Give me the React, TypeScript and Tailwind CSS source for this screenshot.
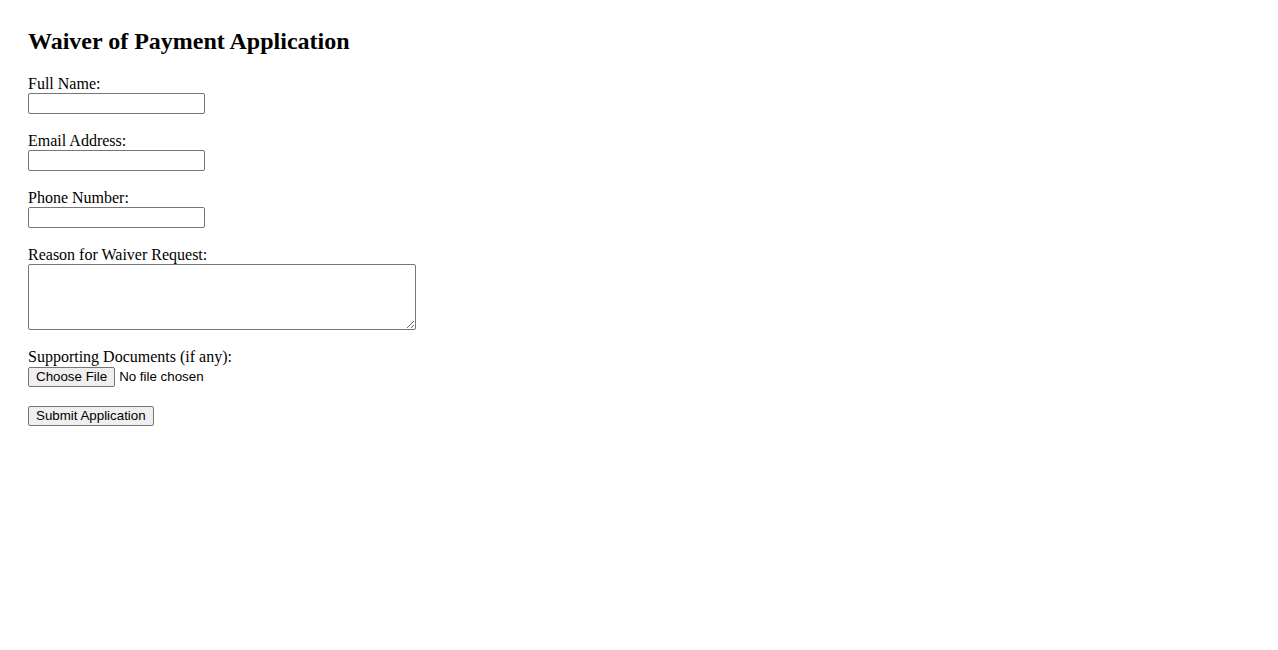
export default function App() {
  return (
    <div className="min-h-screen bg-white px-[28px] pt-[28px] text-black font-['Liberation_Serif',serif]">
      <h2 className="text-[24px] font-bold leading-[27.6px] mb-[19px]">Waiver of Payment Application</h2>
      <form onSubmit={(e) => e.preventDefault()}>
        <TextField label="Full Name:" />
        <TextField label="Email Address:" />
        <TextField label="Phone Number:" />

        <label className="block text-[16px] leading-[18px]">Reason for Waiver Request:</label>
        <textarea className="block w-[388px] h-[66px] border border-[#767676] rounded-[2px] mb-[18px] outline-none" />

        <label className="block text-[16px] leading-[18px]">Supporting Documents (if any):</label>
        <div className="flex items-center h-[22px] mb-[15px] font-['Liberation_Sans',sans-serif] text-[13.33px]">
          <button
            type="button"
            className="h-[20px] px-[7px] bg-[#efefef] border border-[#767676] rounded-[2px] leading-[16px]"
          >
            Choose File
          </button>
          <span className="ml-[4px]">No file chosen</span>
        </div>

        <button
          type="submit"
          className="h-[20px] px-[7px] bg-[#efefef] border border-[#767676] rounded-[2px] leading-[16px] font-['Liberation_Sans',sans-serif] text-[13.33px]"
        >
          Submit Application
        </button>
      </form>
    </div>
  );
}

function TextField({ label }: { label: string }) {
  return (
    <>
      <label className="block text-[16px] leading-[18px]">{label}</label>
      <input
        type="text"
        className="block w-[177px] h-[21px] border border-[#767676] rounded-[2px] mb-[18px] outline-none"
      />
    </>
  );
}
